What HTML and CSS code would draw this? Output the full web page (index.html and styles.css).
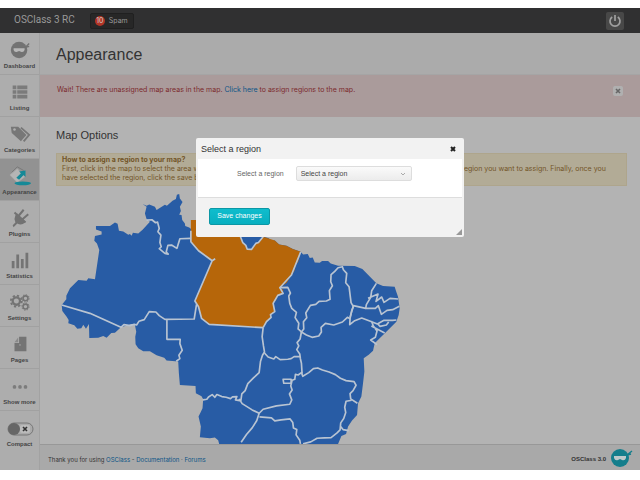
FILE: index.html
```html
<!DOCTYPE html>
<html lang="en">
<head>
<meta charset="utf-8">
<title>Appearance - OSClass</title>
<link rel="stylesheet" href="styles.css">
</head>
<body>
<div class="app">
  <header class="topbar">
    <span class="brand">OSClass 3 RC</span>
    <a class="spam" href="#"><span class="count">10</span>Spam</a>
    <button class="power" type="button" aria-label="Log out">
      <svg viewBox="0 0 18 18"><path d="M6.2 5A5 5 0 1 0 11.8 5M9 3v6" fill="none" stroke="#a0a0a0" stroke-width="1.7"/></svg>
    </button>
  </header>
  <div class="columns">
    <nav class="sidebar">
      <a href="#"><svg viewBox="0 0 24 24"><circle cx="11" cy="12" r="9" fill="#737373"/><path d="M4 9Q11 7 18 9L22 5M18 9l4-1" fill="none" stroke="#737373" stroke-width="1.5"/><path d="M5 10h12v2q-1 3-4 2l-2-1-2 1q-3 1-4-2z" fill="#b8b8b8"/></svg>Dashboard</a>
      <a href="#"><svg viewBox="0 0 24 24"><path d="M4 5h4v4H4zM9 5h11v4H9zM4 10h4v4H4zM9 10h11v4H9zM4 15h4v4H4zM9 15h11v4H9z" fill="#7b7b7b"/></svg>Listing</a>
      <a href="#"><svg viewBox="0 0 24 24"><path d="M2 4l8 0 9 9-6 7-10-9z" fill="#777"/><path d="M13 5l9 8-6 7" fill="none" stroke="#777" stroke-width="2"/><circle cx="6" cy="7" r="1.4" fill="#b0b0b0"/></svg>Categories</a>
      <a class="current" href="#"><svg viewBox="0 0 24 24"><path d="M9 4l8 9-8 6-8-8z" fill="#b5b5b5" stroke="#aaa"/><path d="M3 8l6-6 7 4" fill="none" stroke="#777"/><ellipse cx="15" cy="20" rx="9" ry="2" fill="#168997"/><path d="M8 14l5-5-2-2 7-1 0 7-2-2-5 5z" fill="#168997"/></svg>Appearance</a>
      <a href="#"><svg viewBox="0 0 24 24"><path d="M7 9l2-2 9 9q-4 5-9 2l-4 4-1-2 3-3q-2-4 0-8z" fill="#727272"/><path d="M11 9l5-6M15 13l6-5M6 6l12 11" stroke="#727272" stroke-width="2.2"/></svg>Plugins</a>
      <a href="#"><svg viewBox="0 0 24 24"><path d="M3 13h3v8H3zM8 6h3v15H8zM13 11h3v10h-3zM18 4h3v17h-3z" fill="#747474"/></svg>Statistics</a>
      <a href="#"><svg viewBox="0 0 24 24" fill="none" stroke="#747474"><circle cx="8" cy="11" r="4" stroke-width="2.5"/><circle cx="8" cy="11" r="6" stroke-width="2" stroke-dasharray="2.4 2.3"/><circle cx="18" cy="8" r="2.7" stroke-width="1.7"/><circle cx="18" cy="8" r="4" stroke-dasharray="1.5 1.6"/><circle cx="18" cy="17" r="2.7" stroke-width="1.7"/><circle cx="18" cy="17" r="4" stroke-dasharray="1.5 1.6"/></svg>Settings</a>
      <a href="#"><svg viewBox="0 0 24 24"><path d="M11 4h8v16H6v-9h5z" fill="#747474"/><path d="M6 10l4-5v5z" fill="#8a8a8a"/><path d="M12 14v-2" stroke="#aaa"/></svg>Pages</a>
      <a href="#"><svg viewBox="0 0 24 24" fill="#7c7c7c"><circle cx="6" cy="13" r="2"/><circle cx="12" cy="13" r="2"/><circle cx="18" cy="13" r="2"/></svg>Show more</a>
      <a href="#"><svg class="toggle" viewBox="0 0 28 24"><rect x="2" y="7" width="25" height="12" rx="6" fill="#aaa" stroke="#777"/><circle cx="8" cy="13" r="6" fill="#666"/><rect x="14" y="9" width="10" height="8" rx="2" fill="#bbb"/><path d="M17 11l4 4m0-4l-4 4" stroke="#333" stroke-width="1.6"/></svg>Compact</a>
    </nav>
    <div class="page">
      <h1>Appearance</h1>
      <div class="warning">
        <p>Wait! There are unassigned map areas in the map. <a href="#">Click here</a> to assign regions to the map.</p>
        <button type="button" aria-label="Dismiss"><svg viewBox="0 0 10 10"><path d="M3 3l4 4m0-4L3 7" stroke="#666" stroke-width="1.6"/></svg></button>
      </div>
      <main>
        <h2>Map Options</h2>
        <p class="help"><strong>How to assign a region to your map?</strong><br>First, click in the map to select the area where you want to assign the region. Then, select from the drop-down menu the region you want to assign. Finally, once you have selected the region, click the save button.</p>
        <svg class="map" viewBox="18 0 1042 762" role="img" aria-label="Map of Brazil">
          <path class="land" d="M278 42L290 47 298 43 315 50 320 60 345 44 351 47 368 32 378 27 381 14 388 12 390 25 398 36 390 50 393 63 388 74 395 75 397 90 405 100 406 108 418 112 430 122 450 90 600 90 640 140 655 144 665 153 675 151 688 163 710 167 729 177 753 185 760 193 774 192 780 204 789 202 795 217 810 218 817 213 835 213 843 220 865 227 915 228 938 237 980 280 1000 288 1035 290 1039 303 1045 320 1050 355 1047 375 1040 395 1010 425 990 445 975 460 970 482 957 494 942 505 944 545 940 580 935 620 925 640 922 675 907 692 895 710 889 732 875 738 865 762 508 762 505 751 495 743 480 745 450 742 453 710 446 680 452 668 458 655 460 628 455 619 438 610 437 588 390 585 387 550 385 515 350 512 343 503 320 496 300 484 280 484 265 475 257 463 256 440 259 425 255 405 245 402 213 412 195 428 184 429 170 443 160 438 145 443 118 444 117 402 108 416 100 404 94 415 82 416 73 406 55 400 56 390 50 380 37 363 35 345 49 328 49 317 60 295 85 270 110 272 115 265 135 268 148 180 141 160 133 152 135 138 155 133 155 124 138 118 138 108 180 108 195 97 203 101 207 122 220 124 235 134 240 132 245 137 249 128 265 130 278 119 300 95 290 87 285 70 290 50z"/>
          <path class="selected" d="M423 112V155L432 169 446 182 465 195 475 206 487 212 435 333 446 350 455 385 466 393 478 403 640 413 650 395 664 382 662 374 675 365 670 340 679 330 684 316 700 310 700 299 690 293 711 278 725 255 734 242 738 224 745 215 753 185 729 177 710 167 688 163 675 151 640 140 626 157 618 160 605 178 592 177 588 166 579 158 572 140 570 90H423z"/>
          <g class="borders">
            <path d="M290 90L306 89 317 98 323 96 328 115 324 125 333 135 330 157 334 170 328 176 345 190 355 192 349 186 354 166 365 165 381 175 390 146 423 145"/>
            <path d="M35 345L120 370 213 412 222 404 240 407 253 403 260 405 267 394 283 389 298 365 318 366 328 377 345 388 433 387 440 343M351 388V448L391 448 390 461 397 481 387 496 390 506 379 514"/>
            <path d="M423 122V155L446 182 487 212 496 206M487 212L435 333 446 350 455 385 478 403 640 413"/>
            <path d="M572 140L579 158 588 166 592 177 605 178 618 160 626 157 640 140"/>
            <path d="M640 413L650 395 664 382 662 374 675 365 670 340 684 316 700 310 690 293 725 255 753 185"/>
            <path d="M690 293L714 292 722 309 717 318 720 340 726 355 740 367 736 383 747 400 745 417 755 426"/>
            <path d="M878 230L865 233 855 244 844 254 843 275 848 287 839 302 841 328 830 333 808 334 798 343 782 346 768 369 771 383 761 395 762 417 755 426 770 435 787 442 807 438 815 426 814 412 827 400 852 405 878 396 893 382 901 386 906 362 911 350 904 338 898 290 888 278 891 250 881 239z"/>
            <path d="M980 280L966 302 963 322 950 344 948 355 911 347 901 382M955 325L985 312 979 334 996 321 1003 337 1021 325 1045 327"/>
            <path d="M901 386L900 404 915 392 936 384 960 393 983 402 1003 391 1029 391 1040 390M948 355L977 355 986 347 995 373 1012 361 1029 359 1049 349M965 393L971 408 982 423 977 442 963 450 982 464M965 408L1005 429M983 400L991 409 1010 405 1017 396"/>
            <path d="M640 413L637 440 641 468 644 486 638 496 632 515 628 548 611 564 594 581 586 602 576 612 573 633 557 630 561 620 548 621 542 626 529 622 516 620 501 614 495 622 487 614 476 621 471 628 459 630M568 627L577 641 607 660 628 670 640 658 680 648 720 643 726 630 719 612 727 600 723 588 727 571 735 568 737 553 745 555 755 548 759 559 777 548 791 536 804 534 818 540 838 546 857 554 872 565 889 572 913 575 919 586 910 602 901 611 903 627 923 640"/>
            <path d="M755 426L751 447 742 458 747 468 741 479 750 492 752 507 755 520 757 551M644 489L655 501 672 507 678 500 691 509 714 508 724 506 733 500 750 499M700 568H724V580H702z"/>
            <path d="M628 670L621 692 607 714 590 734 574 757M629 681L665 684 675 693 694 690 721 687 729 698 731 714 741 719 739 735 750 751 752 762M906 631L889 634 885 652 888 668 882 686 873 699 871 720 862 729 844 743 824 744 802 745 783 756 760 762M871 708L880 719 897 722"/>
          </g>
        </svg>
      </main>
      <footer>
        <p>Thank you for using <a href="#">OSClass</a> - <a href="#">Documentation</a> · <a href="#">Forums</a></p>
        <strong>OSClass 3.0</strong>
        <svg viewBox="0 0 24 24"><circle cx="11" cy="12" r="9" fill="#147e8c"/><path d="M3 9Q11 7 18 9l5-4M18 9l4-1" fill="none" stroke="#147e8c" stroke-width="1.5"/><path d="M5 10h12v2q-1 3-4 2l-2-1-2 1q-3 1-4-2z" fill="#bdc9ca"/></svg>
      </footer>
    </div>
  </div>
  <dialog open aria-labelledby="dialog-title">
    <div class="dialog-head">
      <h3 id="dialog-title">Select a region</h3>
      <button type="button" aria-label="Close"><svg viewBox="0 0 10 10"><path d="M3 3l4 4m0-4L3 7" stroke="#222" stroke-width="2"/></svg></button>
    </div>
    <form>
      <div class="field">
        <label for="region">Select a region</label>
        <div class="select">
          <select id="region"><option>Select a region</option></select>
          <svg viewBox="0 0 6 4"><path d="M1 1l2 2 2-2" fill="none" stroke="#aaa"/></svg>
        </div>
      </div>
      <div class="actions"><button type="button">Save changes</button></div>
    </form>
    <svg class="grip" viewBox="0 0 8 8"><path d="M1 7L7 1V7z" fill="#999"/></svg>
  </dialog>
</div>
</body>
</html>
```
FILE: styles.css
```css
* { box-sizing: border-box; }
body { margin: 8px 0 10px; background: #fff; font: 7px/9px "Liberation Sans", Arial, sans-serif; color: #333; }
h1, h2, h3, p { margin: 0; font-weight: normal; }
a { color: #0c5487; text-decoration: none; }
button { padding: 0; border: 0; font: inherit; }
svg { display: block; }
.app { position: relative; background: #b3b3b3; }

.topbar { display: flex; align-items: center; height: 25px; padding: 0 16px 0 14px; background: #303031; color: #999; }
.brand { font: 10px/12px Roboto, sans-serif; padding-bottom: 2px; }
.spam { display: flex; align-items: center; gap: 4px; height: 16px; margin-left: 15px; padding: 0 5px 0 4px; border: 1px solid #202020; border-radius: 2px; background: #272727; color: #999; font: 7px/9px Inter, sans-serif; }
.count { width: 10px; height: 10px; border-radius: 5px; background: #b23426; color: #ccc; font-size: 7px; line-height: 10px; text-align: center; }
.power { width: 18px; height: 18px; margin-left: auto; border-radius: 2px; background: #484848; }

.columns { display: flex; }
.sidebar { flex: 0 0 40px; background: #adadad; border-right: 1px solid #a2a2a2; }
.sidebar a { display: flex; flex-direction: column; align-items: center; height: 42px; padding-top: 5px; border-bottom: 1px solid #a1a1a1; color: #444; font-size: 6px; font-weight: bold; line-height: 9px; white-space: nowrap; }
.sidebar a:last-child { border-bottom: 0; }
.sidebar svg { width: 22px; height: 24px; }
.sidebar .toggle { width: 28px; }
.sidebar .current { background: #929292; }

.page { flex: 1; min-width: 0; display: flex; flex-direction: column; }
h1 { height: 42px; padding: 12px 16px 0; background: #ababab; border-bottom: 1px solid #a5a5a5; font-size: 16px; line-height: 20px; }
.warning { display: flex; justify-content: space-between; align-items: flex-start; height: 42px; padding: 10px 17px 0 17px; background: #aa9b9b; color: #7c2a2d; font: 7px/9px Inter, sans-serif; }
.warning button { width: 10px; height: 10px; margin-top: 1px; background: #b0b0b0; border-radius: 2px; }
main { flex: 1; padding: 11px 13px 0 16px; }
h2 { font-size: 11px; line-height: 14px; color: #333; }
.help { margin-top: 11px; padding: 1px 18px 0 5px; height: 33px; background: #b2ab96; border: 1px solid #aea58c; color: #735528; font: 7px/9px Inter, sans-serif; }
.map { width: 347px; height: 254px; margin-top: 4px; }
.land { fill: #285ca5; }
.selected { fill: #b6660a; }
.borders { fill: none; stroke: #b9c4d2; stroke-width: 5; stroke-linejoin: round; }
footer { display: flex; align-items: center; height: 26px; padding: 0 7px 0 8px; background: #a9a9a9; border-top: 1px solid #989898; }
footer p { padding-top: 3px; font: 6px/9px Inter, sans-serif; }
footer strong { margin-left: auto; padding-top: 3px; font-size: 6px; }
footer svg { width: 24px; height: 24px; margin-left: 3px; }

dialog { position: absolute; top: 130px; left: 196px; width: 268px; margin: 0; padding: 0 2px; border: 0; border-radius: 2px; background: #f2f2f2; color: #333; }
.dialog-head { display: flex; align-items: center; justify-content: space-between; height: 21px; padding: 0 4px 0 3px; }
h3 { font-size: 9px; line-height: 12px; }
.dialog-head button { width: 10px; height: 10px; background: none; }
.field { display: flex; align-items: flex-start; gap: 12px; height: 39px; padding: 7px 0 0 39px; background: #fff; border-bottom: 1px solid #ddd; }
label { line-height: 16px; color: #666; }
.select { position: relative; width: 116px; }
select { display: block; width: 100%; height: 15px; padding: 0 4px; appearance: none; border: 1px solid #ddd; border-radius: 2px; background: linear-gradient(#fafafa, #ececec); color: #444; font: inherit; }
.select svg { position: absolute; right: 6px; top: 6px; width: 6px; height: 4px; }
.actions { height: 39px; padding: 10px 11px 0; }
.actions button { width: 61px; height: 17px; padding-bottom: 2px; border: 1px solid #0c97a5; border-radius: 2px; background: linear-gradient(#0fbdcd, #08afc0); color: #fff; }
.grip { position: absolute; right: 1px; bottom: 1px; width: 8px; height: 8px; }
```
